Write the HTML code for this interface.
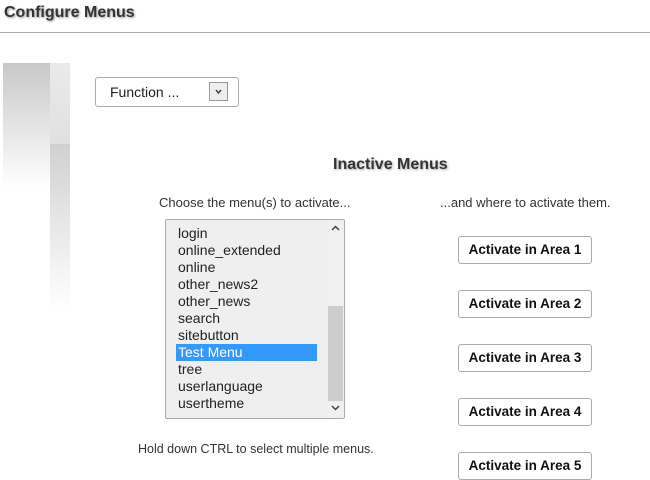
<!DOCTYPE html>
<html><head><style>
body{margin:0;width:650px;height:480px;background:#fff;font-family:"Liberation Sans",sans-serif;position:relative;overflow:hidden;color:#222}
.a{position:absolute}
h1{position:absolute;left:4px;top:4px;margin:0;font-size:16px;font-weight:bold;color:#333;text-shadow:1px 1px 2px #999}
.btn{position:absolute;left:458px;width:132px;height:26px;border:1px solid #aaa;border-radius:3px;font-size:13.5px;font-weight:bold;color:#111;text-align:center;line-height:26px;background:#fff}
.li{position:absolute;left:178px;font-size:14px;color:#222;line-height:17px}
</style></head><body>
<h1>Configure Menus</h1>
<div class="a" style="left:0;top:32px;width:650px;height:1px;background:#aaa"></div>
<div class="a" style="left:3px;top:63px;width:47px;height:125px;background:linear-gradient(#c8c8c8,#fff)"></div>
<div class="a" style="left:50px;top:63px;width:20px;height:82px;background:linear-gradient(#eaeaea,#e0e0e0)"></div>
<div class="a" style="left:50px;top:144px;width:20px;height:166px;background:linear-gradient(#d0d0d0,#fff)"></div>
<div class="a" style="left:95px;top:77px;width:142px;height:28px;border:1px solid #aaa;border-radius:3px;background:#fff"></div>
<div class="a" style="left:110px;top:84px;font-size:14px;color:#222">Function ...</div>
<div class="a" style="left:209px;top:82px;width:17px;height:17px;border:1px solid #999;background:#eee"><svg width="17" height="17"><path d="M6 7l2.5 3 2.5-3" stroke="#535" stroke-width="1.5" fill="none"/></svg></div>
<div class="a" style="left:333px;top:156px;font-size:16px;font-weight:bold;color:#333;text-shadow:1px 1px 2px #aaa">Inactive Menus</div>
<div class="a" style="left:159px;top:195px;font-size:13px;color:#333">Choose the menu(s) to activate...</div>
<div class="a" style="left:440px;top:195px;font-size:13px;color:#333">...and where to activate them.</div>
<div class="a" style="left:165px;top:219px;width:178px;height:198px;border:1px solid #aaa;border-radius:2px;background:#efefef"></div>
<div class="a" style="left:328px;top:220px;width:15px;height:197px;background:#f0f0f0"></div>
<div class="a" style="left:328px;top:306px;width:15px;height:95px;background:#cdcdcd"></div>
<svg class="a" style="left:328px;top:222px" width="15" height="12"><path d="M4 8l3.5-3.5 3.5 3.5" stroke="#535" stroke-width="1.5" fill="none"/></svg>
<svg class="a" style="left:328px;top:402px" width="15" height="12"><path d="M4 4l3.5 3.5 3.5-3.5" stroke="#535" stroke-width="1.5" fill="none"/></svg>
<div class="a" style="left:176px;top:344px;width:141px;height:17px;background:#3399ff"></div>
<div class="li" style="top:225px">login</div>
<div class="li" style="top:242px">online_extended</div>
<div class="li" style="top:259px">online</div>
<div class="li" style="top:276px">other_news2</div>
<div class="li" style="top:293px">other_news</div>
<div class="li" style="top:310px">search</div>
<div class="li" style="top:327px">sitebutton</div>
<div class="li" style="top:344px;color:#fff">Test Menu</div>
<div class="li" style="top:361px">tree</div>
<div class="li" style="top:378px">userlanguage</div>
<div class="li" style="top:395px">usertheme</div>
<div class="a" style="left:138px;top:442px;font-size:12.5px;color:#333">Hold down CTRL to select multiple menus.</div>
<div class="btn" style="top:236px">Activate in Area 1</div>
<div class="btn" style="top:290px">Activate in Area 2</div>
<div class="btn" style="top:344px">Activate in Area 3</div>
<div class="btn" style="top:398px">Activate in Area 4</div>
<div class="btn" style="top:452px">Activate in Area 5</div>
</body></html>
